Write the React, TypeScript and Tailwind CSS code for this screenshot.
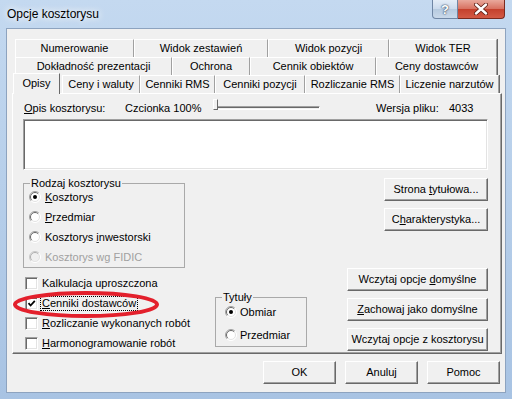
import React from "react";

type TabDef = { label: string; w: string };

const row1: TabDef[] = [
  { label: "Numerowanie", w: "w-[119px]" },
  { label: "Widok zestawień", w: "w-[134px]" },
  { label: "Widok pozycji", w: "w-[121px]" },
  { label: "Widok TER", w: "w-[108px]" },
];

const row2: TabDef[] = [
  { label: "Dokładność prezentacji", w: "w-[157px]" },
  { label: "Ochrona", w: "w-[78px]" },
  { label: "Cennik obiektów", w: "w-[126px]" },
  { label: "Ceny dostawców", w: "w-[121px]" },
];

const row3: TabDef[] = [
  { label: "Ceny i waluty", w: "w-[78px]" },
  { label: "Cenniki RMS", w: "w-[75px]" },
  { label: "Cenniki pozycji", w: "w-[90px]" },
  { label: "Rozliczanie RMS", w: "w-[95px]" },
  { label: "Liczenie narzutów", w: "w-[99px]" },
];

const tabClass =
  "flex h-full items-center justify-center border-t border-l border-r border-t-white border-l-white border-r-[#a0a0a0] shadow-[1px_0_0_#696969]";

const raisedBtn =
  "flex items-center justify-center bg-[#f0f0f0] border border-t-white border-l-white border-r-[#696969] border-b-[#696969] shadow-[inset_-1px_-1px_0_#a0a0a0] leading-none";

const sunken =
  "border border-t-[#a0a0a0] border-l-[#a0a0a0] border-r-white border-b-white shadow-[inset_1px_1px_0_#696969,inset_-1px_-1px_0_#e3e3e3]";

function RadioDot({ checked, disabled }: { checked?: boolean; disabled?: boolean }) {
  return (
    <svg width="12" height="12" viewBox="0 0 12 12" className="shrink-0">
      <circle cx="6" cy="6" r="5.5" fill={disabled ? "#f0f0f0" : "#ffffff"} />
      <path d="M2.1 9.9 A5.5 5.5 0 0 1 9.9 2.1" fill="none" stroke={disabled ? "#c8c8c8" : "#a0a0a0"} strokeWidth="1" />
      <path d="M2.8 9.2 A4.5 4.5 0 0 1 9.2 2.8" fill="none" stroke={disabled ? "#b0b0b0" : "#696969"} strokeWidth="1" />
      <path d="M9.9 2.1 A5.5 5.5 0 0 1 2.1 9.9" fill="none" stroke="#ffffff" strokeWidth="1" />
      <path d="M9.2 2.8 A4.5 4.5 0 0 1 2.8 9.2" fill="none" stroke="#e3e3e3" strokeWidth="1" />
      {checked && <circle cx="6" cy="6" r="2" fill="#000" />}
    </svg>
  );
}

function Check({ checked, children, focus }: { checked?: boolean; children: React.ReactNode; focus?: boolean }) {
  return (
    <div className="flex h-[20px] items-center pl-[2px]">
      <span className={`flex h-[13px] w-[13px] shrink-0 items-center justify-center bg-white ${sunken}`}>
        {checked && (
          <svg width="9" height="9" viewBox="0 0 9 9">
            <path d="M1.5 4.2 L3.6 6.5 L7.8 1.8" fill="none" stroke="#000" strokeWidth="1.8" />
          </svg>
        )}
      </span>
      <span className={`ml-[3px] px-[1px] leading-[13px] ${focus ? "outline outline-1 outline-dotted outline-black" : ""}`}>
        {children}
      </span>
    </div>
  );
}

function RadioRow({
  children,
  checked,
  disabled,
  gap,
}: {
  children: React.ReactNode;
  checked?: boolean;
  disabled?: boolean;
  gap: string;
}) {
  return (
    <div className="flex h-[14px] items-center">
      <RadioDot checked={checked} disabled={disabled} />
      <span className={`${gap} leading-[13px] ${disabled ? "text-[#a0a0a0]" : ""}`}>{children}</span>
    </div>
  );
}

export default function App() {
  return (
    <div className="relative h-[399px] w-[512px] overflow-hidden bg-[linear-gradient(180deg,#c4d9f0_0%,#b7cfea_45%,#a8c3e3_100%)] font-['Liberation_Sans',Arial,sans-serif] text-[11px] text-black">
      {/* title bar */}
      <div className="flex h-[28px] items-start">
        <div className="ml-[7px] mt-[7px] text-[12px] leading-[15px] [text-shadow:0_0_6px_#fff,0_0_10px_#fff]">
          Opcje kosztorysu
        </div>
        <div className="ml-auto mr-[7px] flex">
          <div className="flex h-[19px] w-[26px] items-center justify-center rounded-bl-[4px] border border-t-0 border-[#6f86a4] bg-[linear-gradient(180deg,#e4edf7_0%,#cbdaec_50%,#b6cadf_51%,#c9d9ea_100%)] text-[13px] font-bold leading-none text-white [text-shadow:0_0_2px_#2c3f58,0_0_1px_#2c3f58]">
            ?
          </div>
          <div className="flex h-[19px] w-[47px] items-center justify-center rounded-br-[4px] border border-l-0 border-t-0 border-[#7a2a1e] bg-[linear-gradient(180deg,#e9a99c_0%,#d7705f_50%,#c4402c_51%,#d35a45_100%)]">
            <svg width="14" height="12" viewBox="0 0 14 12">
              <path d="M2 1.5 L12 10.5 M12 1.5 L2 10.5" stroke="#5a1a10" strokeWidth="4" strokeLinecap="round" />
              <path d="M2 1.5 L12 10.5 M12 1.5 L2 10.5" stroke="#ffffff" strokeWidth="2.4" strokeLinecap="round" />
            </svg>
          </div>
        </div>
      </div>

      {/* client area */}
      <div className="mx-[6px] h-[365px] border border-[#8da3bf] bg-[#f0f0f0] pt-[10px]">
        <div className="ml-[5px] w-[490px]">
          <div className="ml-[3px] flex h-[18px]">
            {row1.map((t) => (
              <div key={t.label} className={`${tabClass} ${t.w}`}>
                {t.label}
              </div>
            ))}
          </div>
          <div className="ml-[3px] flex h-[18px]">
            {row2.map((t) => (
              <div key={t.label} className={`${tabClass} ${t.w}`}>
                {t.label}
              </div>
            ))}
          </div>
          <div className="ml-[1px] flex h-[18px] items-end">
            <div className="relative z-10 mb-[-1px] flex h-[21px] w-[47px] items-center justify-center border-l border-r border-t border-l-white border-t-white border-r-[#696969] bg-[#f0f0f0] pb-[1px]">
              Opisy
            </div>
            <div className="ml-[2px] flex h-full">
              {row3.map((t) => (
                <div key={t.label} className={`${tabClass} ${t.w}`}>
                  {t.label}
                </div>
              ))}
            </div>
          </div>

          {/* tab panel */}
          <div className="h-[261px] border border-b-[#696969] border-l-white border-r-[#696969] border-t-white pl-[10px] pr-[13px] shadow-[inset_-1px_-1px_0_#a0a0a0]">
            <div className="mt-[7px] flex h-[14px] items-center leading-[13px]">
              <span className="ml-[1px] w-[101px]">
                <u>O</u>pis kosztorysu:
              </span>
              <span className="w-[88px]">Czcionka 100%</span>
              <div className="relative flex h-[14px] w-[107px] items-center">
                <div className="ml-[2px] h-[4px] flex-1 border border-b-white border-l-[#a0a0a0] border-r-white border-t-[#a0a0a0] shadow-[inset_1px_1px_0_#696969]" />
                <div className="absolute left-0 top-[-2px] h-[11px] w-[5px] border border-b-[#696969] border-l-white border-r-[#696969] border-t-white bg-[#f0f0f0]" />
              </div>
              <span className="ml-[56px] w-[73px]">Wersja pliku:</span>
              <span>4033</span>
            </div>

            <div className={`mt-[4px] h-[51px] bg-white ${sunken}`} />

            <div className="mt-[7px] flex items-start justify-between">
              <fieldset className="h-[91px] w-[162px] border border-[#a9a9a9]">
                <legend className="ml-[6px] px-[1px] leading-[13px]">Rodzaj kosztorysu</legend>
                <div className="flex flex-col gap-[6px] pl-[5px]">
                  <RadioRow checked gap="ml-[4px]">
                    <u>K</u>osztorys
                  </RadioRow>
                  <RadioRow gap="ml-[4px]">
                    <u>P</u>rzedmiar
                  </RadioRow>
                  <RadioRow gap="ml-[4px]">
                    Kosztorys <u>i</u>nwestorski
                  </RadioRow>
                  <RadioRow disabled gap="ml-[4px]">
                    Kosztorys wg FIDIC
                  </RadioRow>
                </div>
              </fieldset>
              <div className="mt-[1px] flex flex-col gap-[7px]">
                <div className={`${raisedBtn} h-[23px] w-[104px]`}>
                  <span>
                    Strona <u>t</u>ytułowa...
                  </span>
                </div>
                <div className={`${raisedBtn} h-[23px] w-[104px]`}>
                  <span>
                    C<u>h</u>arakterystyka...
                  </span>
                </div>
              </div>
            </div>

            <div className="flex items-start">
              <div className="w-[192px] pt-[5px]">
                <Check>Kalkulacja uproszczona</Check>
                <Check checked focus>
                  <u>C</u>enniki dostawców
                </Check>
                <Check>
                  <u>R</u>ozliczanie wykonanych robót
                </Check>
                <Check>
                  <u>H</u>armonogramowanie robót
                </Check>
              </div>
              <fieldset className="mt-[23px] h-[56px] w-[92px] border border-[#a9a9a9]">
                <legend className="ml-[6px] px-[1px] leading-[13px]">Tytuły</legend>
                <div className="mt-[1px] flex flex-col gap-[9px] pl-[9px]">
                  <RadioRow checked gap="ml-[3px]">
                    Obmiar
                  </RadioRow>
                  <RadioRow gap="ml-[3px]">Przedmiar</RadioRow>
                </div>
              </fieldset>
              <div className="ml-auto flex flex-col gap-[7px]">
                <div className={`${raisedBtn} h-[23px] w-[141px]`}>
                  <span>
                    Wczytaj opcje <u>d</u>omyślne
                  </span>
                </div>
                <div className={`${raisedBtn} h-[23px] w-[141px]`}>
                  <span>
                    <u>Z</u>achowaj jako domyślne
                  </span>
                </div>
                <div className={`${raisedBtn} h-[23px] w-[141px]`}>
                  <span>Wczytaj opcje z kosztorysu</span>
                </div>
              </div>
            </div>
          </div>
        </div>

        <div className="mr-[5px] mt-[7px] flex justify-end gap-[9px]">
          <div className={`${raisedBtn} h-[23px] w-[73px]`}>OK</div>
          <div className={`${raisedBtn} h-[23px] w-[73px]`}>Anuluj</div>
          <div className={`${raisedBtn} h-[23px] w-[73px]`}>Pomoc</div>
        </div>
      </div>

      {/* red annotation ellipse */}
      <svg className="absolute left-[11px] top-[291px]" width="150" height="27" viewBox="0 0 150 27">
        <ellipse cx="75" cy="13.5" rx="71" ry="11.5" fill="none" stroke="#e3202c" strokeWidth="4" />
      </svg>
    </div>
  );
}
